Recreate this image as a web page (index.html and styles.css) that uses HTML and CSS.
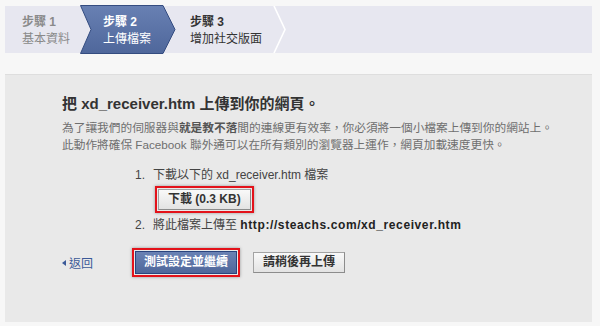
FILE: index.html
```html
<html>
    <head>
        <meta charset="utf-8">
        <link rel="stylesheet" href="styles.css">
    </head>
    <body>
        <div class="steps">
            <div class="step step-done">
                <b>步驟 1</b>
                <span>基本資料</span>
            </div>
            <div class="step step-active">
                <svg class="step-shape" width="96" height="49" viewBox="0 0 96 49">
                    <defs>
                        <linearGradient id="activeFill" x1="0" y1="0" x2="0" y2="1">
                            <stop offset="0" stop-color="#6880b3"/>
                            <stop offset="1" stop-color="#4f679b"/>
                        </linearGradient>
                    </defs>
                    <path d="M0.5 0.5 H83 L95 24.5 L83 48.5 H0.5 L11 24.5 Z" fill="url(#activeFill)" stroke="#344c80" stroke-width="1"/>
                </svg>
                <b>步驟 2</b>
                <span>上傳檔案</span>
            </div>
            <div class="step step-next">
                <b>步驟 3</b>
                <span>增加社交版面</span>
                <svg class="step-sep" width="14" height="47" viewBox="0 0 14 47">
                    <path d="M1 0 L12 23.5 L1 47" fill="none" stroke="#fff" stroke-width="1.6"/>
                </svg>
            </div>
        </div>

        <div class="panel">
            <h1>把 xd_receiver.htm 上傳到你的網頁。</h1>
            <p class="intro">為了讓我們的伺服器與<b>就是教不落</b>間的連線更有效率，你必須將一個小檔案上傳到你的網站上。<br>此動作將確保 Facebook 聯外通可以在所有類別的瀏覽器上運作，網頁加載速度更快。</p>

            <div class="steps-list">
                <div class="item">
                    <span class="num">1.</span>
                    <div>
                        <div>下載以下的 xd_receiver.htm 檔案</div>
                        <div class="mark">
                            <span class="btn btn-gray">下載 (0.3 KB)</span>
                        </div>
                    </div>
                </div>
                <div class="item item-2">
                    <span class="num">2.</span>
                    <div>將此檔案上傳至 <b class="url">http://steachs.com/xd_receiver.htm</b></div>
                </div>
            </div>

            <div class="actions">
                <a class="back"><span class="tri"></span>返回</a>
                <div class="mark">
                    <span class="btn btn-blue">測試設定並繼續</span>
                </div>
                <span class="btn btn-gray btn-later">請稍後再上傳</span>
            </div>
        </div>
    </body>
</html>
```

FILE: styles.css
```css
body {
    margin: 0;
    padding: 6px 8px 0 5px;
    background: #f7f7f7;
    font-family: "Liberation Sans", "Noto Sans CJK TC", sans-serif;
    font-size: 12px;
    color: #333;
}

.steps {
    display: flex;
    height: 47px;
    background: #e7e7f0;
}

.step {
    position: relative;
    display: flex;
    flex-direction: column;
    padding-top: 8px;
    line-height: 17px;
    box-sizing: border-box;
}
.step b { font-size: 12px; }

.step-done {
    width: 75px;
    padding-left: 17px;
    color: #8a8a8a;
}

.step-active {
    width: 95px;
    padding-left: 23px;
    color: #fff;
}
.step-active b, .step-active span { position: relative; }

.step-shape {
    position: absolute;
    left: 0;
    top: -1px;
}

.step-next {
    width: 112px;
    padding-left: 15px;
    color: #333;
}

.step-sep {
    position: absolute;
    right: 0;
    top: 0;
}

.panel {
    height: 248px;
    margin-top: 21px;
    box-sizing: border-box;
    padding: 20px 0 0 57px;
    background: #e9e9e9;
    border-top: 1px solid #dedede;
}

h1 {
    margin: 0;
    font-size: 15px;
    line-height: 18px;
    color: #333;
}

.intro {
    margin: 6px 0 0;
    font-size: 11.7px;
    line-height: 17px;
    color: #6f6f6f;
}
.intro b { color: #555; }

.steps-list {
    margin: 14px 0 0 73px;
    line-height: 16px;
    color: #444;
}

.item {
    display: flex;
}
.num {
    width: 18px;
}
.item-2 {
    margin-top: 4px;
}
.url {
    color: #222;
    letter-spacing: 0.6px;
}

.mark {
    display: inline-flex;
    border: 2px solid #e3121a;
    padding: 1px;
    box-shadow: 0 0 3px rgba(0,0,0,0.35);
}
.steps-list .mark {
    margin: 3px 0 0 2px;
}

.btn {
    display: inline-block;
    font-weight: bold;
    font-size: 12px;
    line-height: 15px;
    padding: 2px 9px;
    border: 1px solid;
}

.btn-gray {
    background: linear-gradient(#f9f9f9, #e3e3e3);
    border-color: #a3a3a3 #8c8c8c #8c8c8c #a3a3a3;
    color: #333;
}

.btn-blue {
    background: linear-gradient(#6a82b4, #4f679a);
    border-color: #29447e;
    color: #fff;
    padding: 3px 8px;
}

.actions {
    display: flex;
    align-items: center;
    margin-top: 15px;
}

.back {
    display: flex;
    align-items: center;
    width: 70px;
    color: #3b5998;
    font-size: 12px;
}
.tri {
    width: 0;
    height: 0;
    border-top: 3px solid transparent;
    border-bottom: 3px solid transparent;
    border-right: 4px solid #3b5998;
    margin-right: 3px;
}

.btn-later {
    margin-left: 13px;
}
```
